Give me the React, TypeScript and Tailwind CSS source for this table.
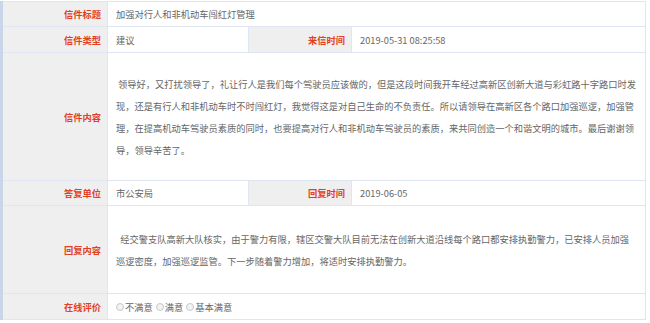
const label = "bg-[#efefef] text-right pr-[6px] font-bold text-[#e2401f] border border-[#dfe6f2] align-middle"
const value = "bg-white pl-[8px] text-[#666] border border-[#dfe6f2] align-middle"

function Radio({ text }: { text: string }) {
  return (
    <span className="inline-flex items-center mr-[3px]">
      <span className="inline-block w-[8px] h-[8px] rounded-full border border-[#c8c8c8] bg-[#f3f3f3] mr-[1px]" />
      {text}
    </span>
  )
}

function App() {
  return (
    <div className="w-[650px] h-[323px] bg-white pt-[1px]" style={{ fontFamily: '"Noto Sans CJK SC", "Noto Sans", sans-serif' }}>
      <table className="w-[646px] border-collapse border-l-[3px] border-l-[#c9d5e8] text-[9.25px] leading-[22px] table-fixed">
        <colgroup>
          <col className="w-[106px]" />
          <col className="w-[141px]" />
          <col className="w-[103px]" />
          <col />
        </colgroup>
        <tbody>
          <tr className="h-[25px]">
            <td className={label}>信件标题</td>
            <td className={value} colSpan={3}>加强对行人和非机动车闯红灯管理</td>
          </tr>
          <tr className="h-[26px]">
            <td className={label}>信件类型</td>
            <td className={value}>建议</td>
            <td className={label}>来信时间</td>
            <td className={value}>2019-05-31 08:25:58</td>
          </tr>
          <tr className="h-[128px]">
            <td className={label}>信件内容</td>
            <td className={value + " pr-[8px]"} colSpan={3}>
              <p className="whitespace-nowrap">
                &nbsp;领导好，又打扰领导了，礼让行人是我们每个驾驶员应该做的，但是这段时间我开车经过高新区创新大道与彩虹路十字路口时发<br />
                现，还是有行人和非机动车时不时闯红灯，我觉得这是对自己生命的不负责任。所以请领导在高新区各个路口加强巡逻，加强管<br />
                理，在提高机动车驾驶员素质的同时，也要提高对行人和非机动车驾驶员的素质，来共同创造一个和谐文明的城市。最后谢谢领<br />
                导，领导辛苦了。
              </p>
            </td>
          </tr>
          <tr className="h-[25px]">
            <td className={label}>答复单位</td>
            <td className={value}>市公安局</td>
            <td className={label}>回复时间</td>
            <td className={value}>2019-06-05</td>
          </tr>
          <tr className="h-[88px]">
            <td className={label}>回复内容</td>
            <td className={value + " pr-[8px]"} colSpan={3}>
              <p className="whitespace-nowrap">
                &nbsp;&nbsp;经交警支队高新大队核实，由于警力有限，辖区交警大队目前无法在创新大道沿线每个路口都安排执勤警力，已安排人员加强<br />
                巡逻密度，加强巡逻监管。下一步随着警力增加，将适时安排执勤警力。
              </p>
            </td>
          </tr>
          <tr className="h-[26px]">
            <td className={label}>在线评价</td>
            <td className={value} colSpan={3}>
              <Radio text="不满意" />
              <Radio text="满意" />
              <Radio text="基本满意" />
            </td>
          </tr>
        </tbody>
      </table>
    </div>
  )
}

export default App
